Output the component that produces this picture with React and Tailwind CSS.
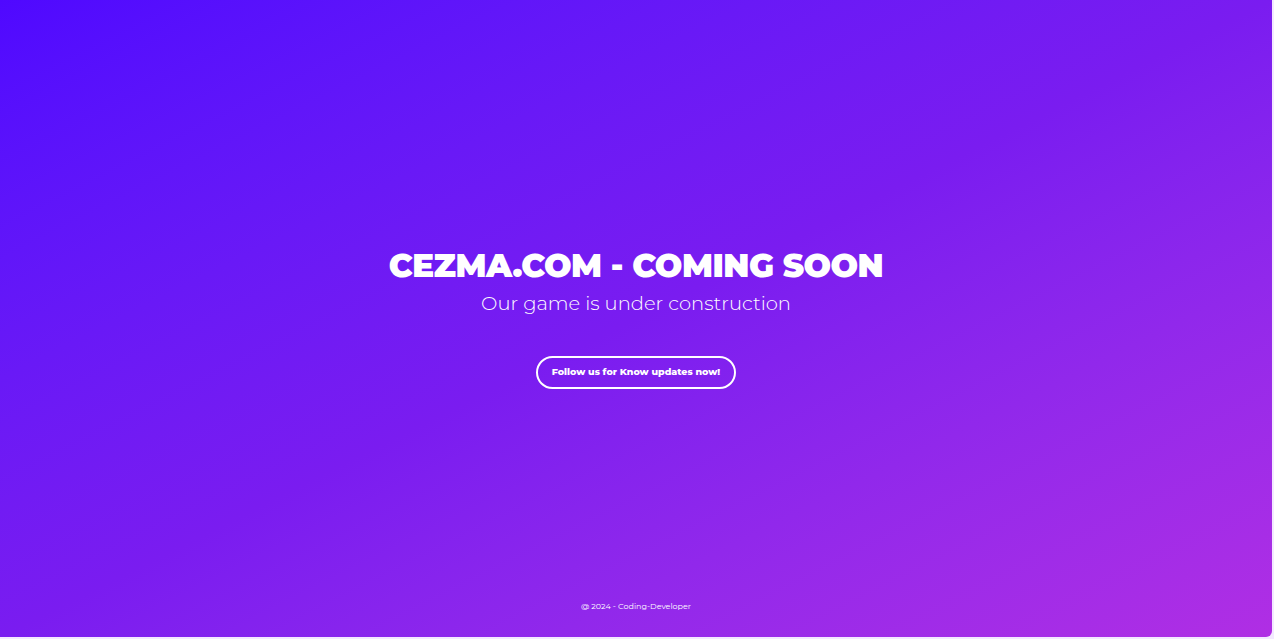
export default function App() {
  return (
    <div className="w-[1274px] h-[639px] bg-[#f3e9ff] overflow-hidden">
      <div
        className="w-[1272px] h-[637px] rounded-br-[6px] flex flex-col items-center bg-gradient-to-br from-[#4f08ff] via-[#7a1cf0] to-[#b02ee4] text-white"
        style={{ fontFamily: 'Montserrat, Inter, "Noto Sans", sans-serif' }}
      >
        <div className="flex-1 flex flex-col items-center justify-center pt-[34px]">
          <h1 className="text-[32.5px] leading-[40px] font-black tracking-[-0.5px] uppercase">
            CEZMA.COM - COMING SOON
          </h1>
          <p className="text-[19.5px] leading-[28px] font-light mt-[3px]">Our game is under construction</p>
          <button className="mt-[39px] h-[33px] px-[14px] rounded-full border-2 border-white text-[9.5px] font-extrabold">
            Follow us for Know updates now!
          </button>
        </div>
        <footer className="text-[8px] pb-[25px]">@ 2024 - Coding-Developer</footer>
      </div>
    </div>
  )
}
